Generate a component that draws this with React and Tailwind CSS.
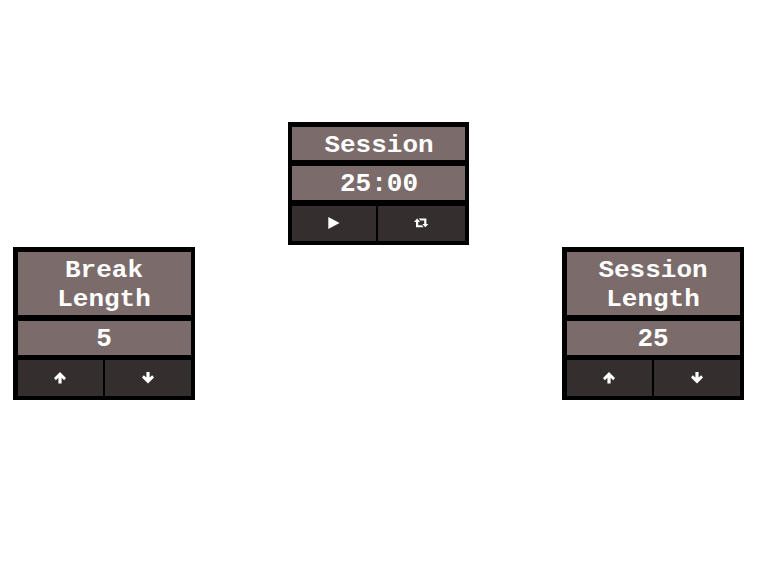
import React from 'react';

const iconPaths = {
  play: 'M0.3 0 L11.6 6 L0.3 12 Z',
  up: 'M6 0 L12 5.9 L10.2 8.2 L7.6 5.8 V11.4 H4.4 V5.8 L1.8 8.2 L0 5.9 Z',
  down: 'M6 11.4 L12 5.5 L10.2 3.2 L7.6 5.6 V0 H4.4 V5.6 L1.8 3.2 L0 5.5 Z',
  repeat:
    'M3.1 1.6 L6.2 5 H4.2 V8.3 H8 L9.6 10.3 H2 V5 H0 Z M4.8 1.6 H12.4 V6.9 H14.4 L11.3 10.3 L8.2 6.9 H10.2 V3.6 H6.4 Z',
};

function Icon({ name }) {
  const width = name === 'repeat' ? 14.4 : 12;
  return (
    <svg width={width} height="12" viewBox={`0 0 ${width} 12`} fill="white" aria-hidden="true">
      <path d={iconPaths[name]} />
    </svg>
  );
}

function Timer({ title, value, icons, tall }) {
  const frame = tall ? 'w-[182px] pl-[5px] pr-1' : 'w-[181px] px-1';
  const controls = tall
    ? 'mt-[5px] h-9 grid-cols-[85px_86px]'
    : 'mt-1.5 h-[35px] grid-cols-[84px_87px]';
  return (
    <section className={`flex flex-col bg-black pb-1 pt-[5px] text-white ${frame}`}>
      <h2 className={`flex items-center justify-center bg-[#7b6c6b] pt-[3px] text-center ${tall ? 'h-[63px]' : 'h-[33px]'}`}>
        <span className={`w-[130px] shrink-0 scale-y-[0.94] leading-[31px] ${tall ? 'pr-px' : 'pl-px'}`}>{title}</span>
      </h2>
      <div className={`mt-1.5 flex h-[34px] items-center justify-center bg-[#7b6c6b] pt-1 ${tall ? 'pr-px' : 'pl-px'}`}>{value}</div>
      <div className={`grid gap-0.5 ${controls}`}>
        {icons.map((name) => (
          <button key={name} className={`flex items-center justify-center bg-[#352e2e] ${tall ? 'pr-px' : 'pb-px'}`}>
            <Icon name={name} />
          </button>
        ))}
      </div>
    </section>
  );
}

export default function App() {
  return (
    <main className="h-[571px] w-[760px] overflow-hidden bg-white pt-[122px] font-['Courier_New','Liberation_Mono',monospace] text-[26px] font-bold leading-[29.5px]">
      <div className="flex pl-[288px]">
        <Timer title="Session" value="25:00" icons={['play', 'repeat']} />
      </div>
      <div className="mt-0.5 flex justify-between pl-[13px] pr-4">
        <Timer tall title="Break Length" value="5" icons={['up', 'down']} />
        <Timer tall title="Session Length" value="25" icons={['up', 'down']} />
      </div>
    </main>
  );
}
